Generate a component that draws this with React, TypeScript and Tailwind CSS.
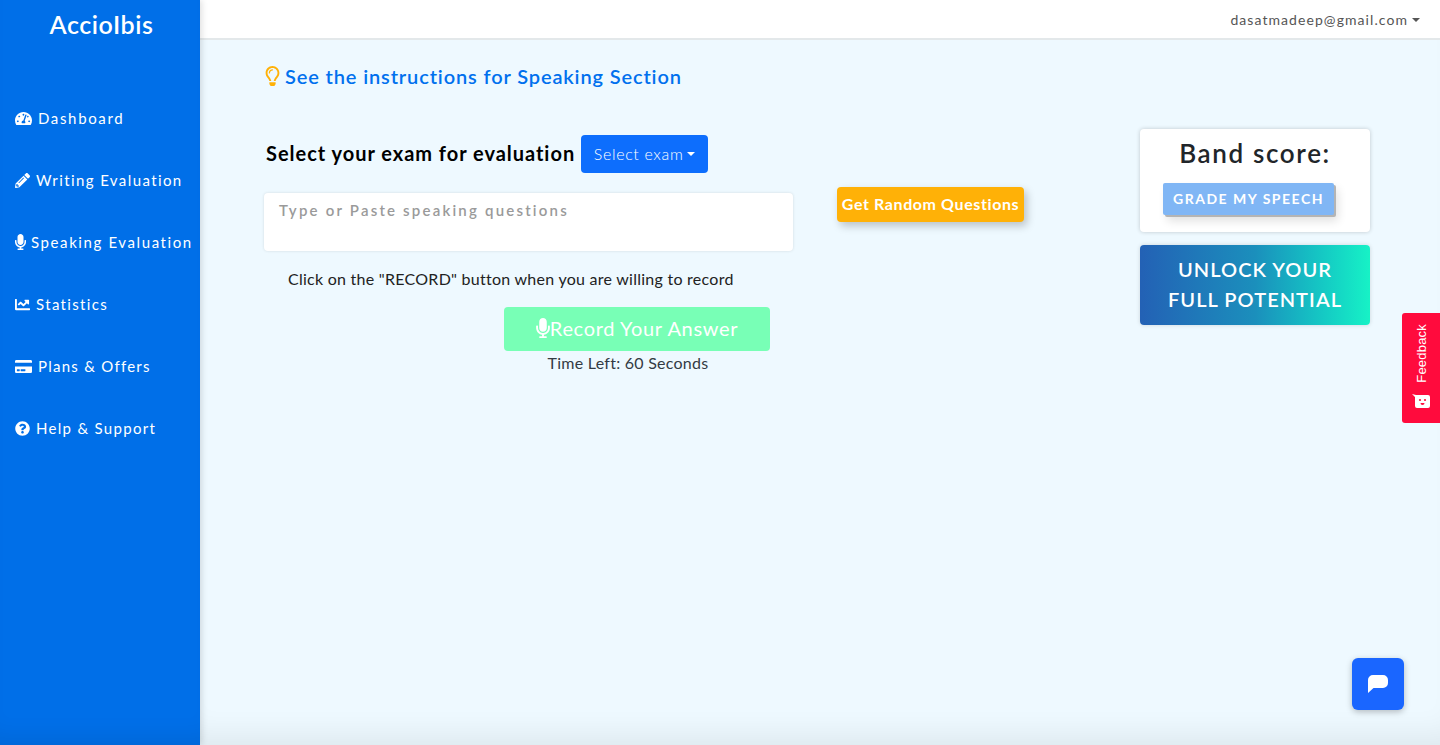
import React from "react";
import {
  FaChartLine,
  FaCreditCard,
  FaMicrophone,
  FaPencilAlt,
  FaQuestionCircle,
  FaRegLightbulb,
  FaTachometerAlt,
} from "react-icons/fa";

const menu = [
  { label: "Dashboard", icon: FaTachometerAlt, gap: "gap-[6px]", size: 17, iconClass: "", tracking: "tracking-[1.65px]" },
  { label: "Writing Evaluation", icon: FaPencilAlt, gap: "gap-[6px]", size: 15, iconClass: "", tracking: "tracking-[1.4px]" },
  { label: "Speaking Evaluation", icon: FaMicrophone, gap: "gap-[5px]", size: 16, iconClass: "w-[11px]", tracking: "tracking-[1.6px]" },
  { label: "Statistics", icon: FaChartLine, gap: "gap-[6px]", size: 15, iconClass: "", tracking: "tracking-[1.35px]" },
  { label: "Plans & Offers", icon: FaCreditCard, gap: "gap-[6px]", size: 17, iconClass: "", tracking: "tracking-[1.25px]" },
  { label: "Help & Support", icon: FaQuestionCircle, gap: "gap-[6px]", size: 15, iconClass: "", tracking: "tracking-[1.3px]" },
];

const Caret = () => (
  <span className="inline-block w-0 h-0 border-x-[4px] border-x-transparent border-t-[4px] border-t-current" />
);

const App: React.FC = () => {
  return (
    <div className="flex h-[745px] w-[1440px] overflow-hidden font-['Lato',sans-serif] bg-[#eef9ff]">
      <aside className="w-[200px] shrink-0 bg-[#006fe8] text-white shadow-[2px_0_6px_rgba(0,0,0,0.12),inset_0_-24px_30px_-24px_rgba(0,0,0,0.12)] z-10">
        <div className="pt-[9px] pl-[3px] text-center text-[25px] leading-[30px] font-semibold tracking-[0.55px]">AccioIbis</div>
        <nav className="mt-[67px] flex flex-col gap-[38px] pl-[15px]">
          {menu.map((item) => (
            <a key={item.label} className={`flex items-center h-[24px] ${item.gap} ${item.tracking} text-[15px] whitespace-nowrap`}>
              <item.icon size={item.size} className={item.iconClass} />
              <span>{item.label}</span>
            </a>
          ))}
        </nav>
      </aside>

      <main className="flex-1 flex flex-col">
        <header className="h-[40px] shrink-0 bg-white border-b-2 border-[#e3e8ea] flex justify-end items-start pr-[20px] pt-[10px]">
          <div className="flex items-center gap-[4px] text-[14px] leading-[20px] tracking-[1.07px] text-[#555555]">
            dasatmadeep@gmail.com
            <Caret />
          </div>
        </header>

        <div className="flex-1 pl-[64px] shadow-[inset_0_-30px_30px_-20px_rgba(0,0,0,0.07)]">
          <div className="mt-[22px] h-[28px] mb-[38px] flex items-center gap-[5px] text-[20px] font-semibold tracking-[0.87px] text-[#0070ee] whitespace-nowrap">
            <FaRegLightbulb size={20} className="ml-[1px] w-[15px] text-[#ffb107]" />
            See the instructions for Speaking Section
          </div>

          <div className="flex items-start">
            <div className="w-[530px] pt-[7px]">
              <div className="flex items-center h-[38px] pl-[2px] gap-[6px]">
                <span className="pb-[2px] text-[20px] font-bold tracking-[0.97px] text-black whitespace-nowrap">Select your exam for evaluation</span>
                <button className="h-[38px] w-[127px] rounded-[4px] bg-[#0d6efd] text-white text-[16px] font-light tracking-[0.65px] flex items-center justify-center gap-[4px]">
                  Select exam
                  <Caret />
                </button>
              </div>
              <div className="mt-[20px] h-[58px] w-[529px] rounded-[4px] bg-white shadow-[0_0_3px_rgba(0,0,0,0.12)] px-[15px] py-[6px] text-[15px] leading-[22px] font-semibold tracking-[2.2px] text-[#9a9a9a]">
                Type or Paste speaking questions
              </div>
              <p className="mt-[16px] pl-[24px] text-[16px] leading-[24px] tracking-[0.26px] text-[#222222] whitespace-nowrap">
                Click on the "RECORD" button when you are willing to record
              </p>
              <button className="ml-[240px] mt-[16px] pb-[3px] h-[44px] w-[266px] rounded-[4px] bg-[#78ffb6] text-white text-[20px] tracking-[0.66px] flex items-center justify-center">
                <FaMicrophone size={20} className="w-[14px]" />
                Record Your Answer
              </button>
              <p className="w-[528px] pl-[200px] text-center text-[16px] leading-[24px] tracking-[0.25px] text-[#333b44] whitespace-nowrap">
                Time Left: 60 Seconds
              </p>
            </div>

            <button className="ml-[43px] mt-[59px] pb-[2px] h-[35px] w-[187px] rounded-[4px] bg-[#ffb107] text-white text-[16px] font-bold tracking-[0.6px] shadow-[3px_4px_8px_rgba(0,0,0,0.22)] whitespace-nowrap">
              Get Random Questions
            </button>

            <div className="ml-[116px] mt-[1px] w-[230px] flex flex-col gap-[13px]">
              <div className="h-[103px] rounded-[4px] bg-white shadow-[0_0_4px_rgba(0,0,0,0.2)] pt-[7px]">
                <div className="text-center text-[26px] leading-[34px] font-semibold tracking-[1.65px] text-[#212529]">Band score:</div>
                <button className="ml-[23px] mt-[13px] pb-[1px] h-[32px] w-[171px] bg-[#80b6f5] text-white text-[14px] font-bold tracking-[1.5px] rounded-[2px] shadow-[2px_2px_0_#b4b4b4,4px_6px_10px_rgba(0,0,0,0.12)] whitespace-nowrap">
                  GRADE MY SPEECH
                </button>
              </div>
              <button className="h-[80px] pb-[2px] rounded-[4px] bg-gradient-to-r from-[#2361b5] via-[#1b8fbc] to-[#17f2c6] text-white text-[20px] leading-[30px] font-semibold tracking-[1.05px] shadow-[0_0_4px_rgba(0,0,0,0.15)]">
                UNLOCK YOUR
                <br />
                FULL POTENTIAL
              </button>
            </div>
          </div>
        </div>
      </main>

      <div className="fixed right-0 top-[313px] h-[110px] w-[38px] rounded-l-[3px] bg-[#ff0b3d] flex flex-col items-center justify-end pb-[15px] gap-[11px] text-white">
        <span className="ml-[2px] [writing-mode:vertical-rl] rotate-180 font-['Liberation_Sans',sans-serif] text-[13px] tracking-[0.2px] leading-[16px]">Feedback</span>
        <svg width="18" height="14" viewBox="0 0 18 14" fill="white">
          <path d="M0 0 4 1h12a2 2 0 0 1 2 2v9a2 2 0 0 1-2 2H5a2 2 0 0 1-2-2V3z" />
          <circle cx="8" cy="6" r="1.1" fill="#ff0b3d" />
          <circle cx="13" cy="6" r="1.1" fill="#ff0b3d" />
          <path d="M8.500 9h4a2 2 0 0 1-4 0z" fill="#ff0b3d" />
        </svg>
      </div>

      <button className="fixed left-[1352px] top-[658px] h-[52px] w-[52px] rounded-[6px] bg-[#1a66ff] shadow-[0_2px_6px_rgba(0,0,0,0.25)] flex items-center justify-center">
        <svg width="20" height="18" viewBox="0 0 20 18" fill="white">
          <path d="M5 0h10a5 5 0 0 1 5 5v3a5 5 0 0 1-5 5H5.500L0 18V5a5 5 0 0 1 5-5z" />
        </svg>
      </button>
    </div>
  );
};

export default App;
